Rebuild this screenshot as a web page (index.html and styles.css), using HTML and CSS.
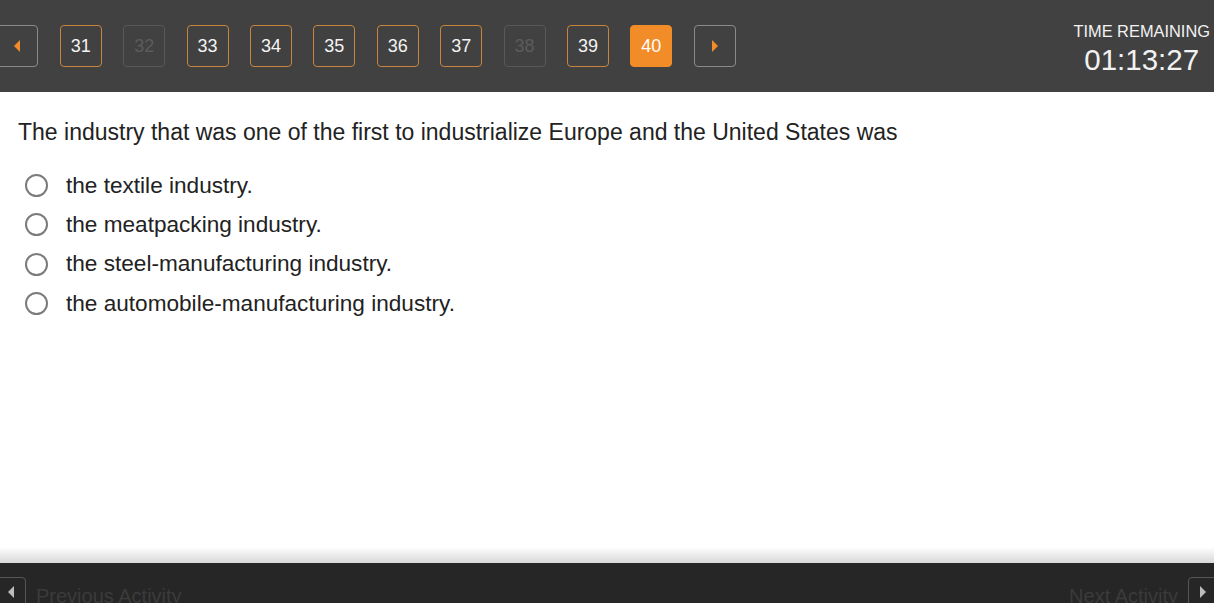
FILE: index.html
```html
<!DOCTYPE html>
<html>
<head>
<meta charset="utf-8">
<link rel="stylesheet" href="styles.css">
</head>
<body>
<div class="page">
  <header class="topbar">
    <nav class="pager">
      <button class="pbtn arrow"><svg width="10" height="14" viewBox="0 0 10 14"><path d="M8 1 L2 7 L8 13 Z" fill="#f28c28"/></svg></button>
      <button class="pbtn num">31</button>
      <button class="pbtn num off">32</button>
      <button class="pbtn num">33</button>
      <button class="pbtn num">34</button>
      <button class="pbtn num">35</button>
      <button class="pbtn num">36</button>
      <button class="pbtn num">37</button>
      <button class="pbtn num off">38</button>
      <button class="pbtn num">39</button>
      <button class="pbtn num cur">40</button>
      <button class="pbtn arrow"><svg width="10" height="14" viewBox="0 0 10 14"><path d="M2 1 L8 7 L2 13 Z" fill="#f28c28"/></svg></button>
    </nav>
    <div class="timer">
      <div class="timer-label">TIME REMAINING</div>
      <div class="timer-value">01:13:27</div>
    </div>
  </header>
  <main class="content">
    <p class="question">The industry that was one of the first to industrialize Europe and the United States was</p>
    <ul class="options">
      <li class="opt"><span class="radio"></span><span>the textile industry.</span></li>
      <li class="opt"><span class="radio"></span><span>the meatpacking industry.</span></li>
      <li class="opt"><span class="radio"></span><span>the steel-manufacturing industry.</span></li>
      <li class="opt"><span class="radio"></span><span>the automobile-manufacturing industry.</span></li>
    </ul>
  </main>
  <div class="shade"></div>
  <footer class="footbar">
    <div class="fnav">
      <span class="fbtn left"><svg width="8" height="12" viewBox="0 0 8 12"><path d="M7 0 L1 6 L7 12 Z" fill="#bdbdbd"/></svg></span>
      <span class="flabel">Previous Activity</span>
    </div>
    <div class="fnav">
      <span class="flabel">Next Activity</span>
      <span class="fbtn right"><svg width="8" height="12" viewBox="0 0 8 12"><path d="M1 0 L7 6 L1 12 Z" fill="#bdbdbd"/></svg></span>
    </div>
  </footer>
</div>
</body>
</html>
```

FILE: styles.css
```css
* { box-sizing: border-box; }
html, body { margin: 0; padding: 0; background: #fff; }
body { font-family: "Liberation Sans", Arial, Helvetica, sans-serif; }
.page {
  width: 1214px;
  height: 603px;
  overflow: hidden;
  display: flex;
  flex-direction: column;
}
.topbar {
  height: 92px;
  flex: none;
  background: #414141;
  display: flex;
  justify-content: space-between;
  align-items: flex-start;
}
.pager {
  display: flex;
  gap: 21.4px;
  margin-left: -3.6px;
  padding-top: 25px;
}
.pbtn {
  width: 42px;
  height: 42px;
  border-radius: 4px;
  border: 1.5px solid #c9843d;
  background: transparent;
  color: #f4f4f4;
  font-family: "Liberation Sans", Arial, sans-serif;
  font-size: 18px;
  padding: 0;
  display: flex;
  align-items: center;
  justify-content: center;
}
.pbtn.off { border-color: #585858; color: #5c5c5c; }
.pbtn.cur { background: #f28c28; border-color: #f28c28; color: #fff; }
.pbtn.arrow { border-color: #8a8a8a; }
.timer {
  padding-top: 22px;
  padding-right: 4px;
  text-align: center;
  color: #f2f2f2;
}
.timer-label { font-size: 16.4px; line-height: 18px; }
.timer-value { font-size: 29.5px; line-height: 34px; margin-top: 3px; }
.content {
  flex: 1;
  padding: 27px 0 0 18px;
  color: #222;
}
.question {
  margin: 0;
  font-size: 23px;
  line-height: 26px;
}
.options {
  list-style: none;
  margin: 21px 0 0 0;
  padding: 0 0 0 7px;
}
.opt {
  display: flex;
  align-items: center;
  gap: 18px;
  height: 39.3px;
  font-size: 22.6px;
}
.radio {
  width: 23px;
  height: 23px;
  border: 2px solid #7b7b7b;
  border-radius: 50%;
  flex: none;
}
.shade {
  height: 16px;
  flex: none;
  background: linear-gradient(to bottom, #ffffff, #d8d8d8);
}
.footbar {
  height: 40px;
  flex: none;
  background: #262626;
  display: flex;
  justify-content: space-between;
  overflow: hidden;
}
.fnav {
  display: flex;
  align-items: flex-start;
  padding-top: 14px;
  gap: 10px;
}
.fbtn {
  width: 30px;
  height: 36px;
  border: 1.5px solid #555;
  border-radius: 4px;
  display: flex;
  align-items: center;
  justify-content: center;
  padding-bottom: 6px;
}
.fbtn.left { margin-left: -4px; }
.fbtn.right { margin-right: -4px; }
.flabel {
  color: #3b3b3b;
  font-size: 20px;
  padding-top: 8px;
}
```
